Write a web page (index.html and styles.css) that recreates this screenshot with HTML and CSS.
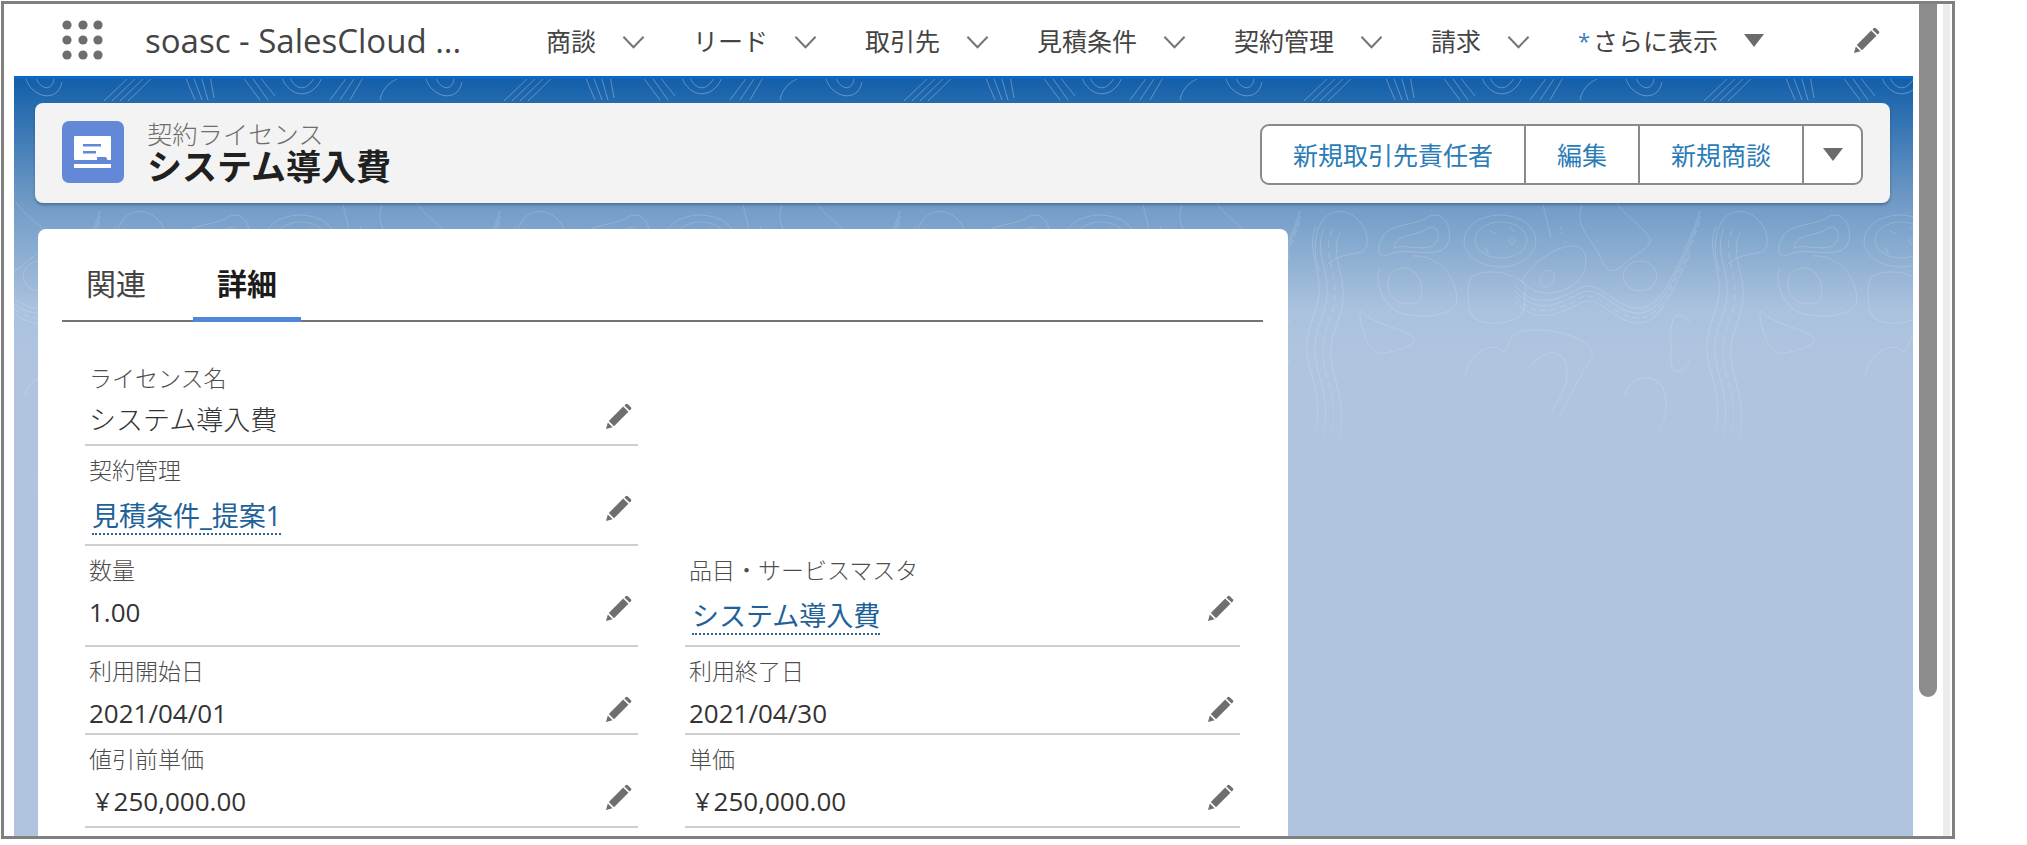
FILE: index.html
```html
<!DOCTYPE html>
<html lang="ja">
<head>
<meta charset="utf-8">
<title>システム導入費</title>
<link rel="stylesheet" href="styles.css">
</head>
<body>
<svg class="defs" width="0" height="0" aria-hidden="true">
  <defs>
    <symbol id="pencil" viewBox="0 0 26 26">
      <path d="M19.6 1.2a1.6 1.6 0 0 1 2.2 0l3 3a1.6 1.6 0 0 1 0 2.2l-1.2 1.2-5.2-5.2z"/>
      <path d="M17.2 3.6l5.2 5.2L8 23.2l-5.2-5.2z"/>
      <path d="M1.8 19.4l4.8 4.8L0 26z"/>
    </symbol>
    <symbol id="chev" viewBox="0 0 24 14">
      <path d="M1.5 1.5L12 12.5 22.5 1.5" fill="none" stroke="#737373" stroke-width="2"/>
    </symbol>
  </defs>
</svg>
<div class="frame">
  <div class="strip"></div>
  <div class="main">
    <header class="nav">
      <svg class="launcher" viewBox="0 0 42 41" width="42" height="41">
        <g fill="#6e6e6e">
          <circle cx="5" cy="5" r="4.6"/><circle cx="21" cy="5" r="4.6"/><circle cx="36" cy="5" r="4.6"/>
          <circle cx="5" cy="20" r="4.6"/><circle cx="21" cy="20" r="4.6"/><circle cx="36" cy="20" r="4.6"/>
          <circle cx="5" cy="35" r="4.6"/><circle cx="21" cy="35" r="4.6"/><circle cx="36" cy="35" r="4.6"/>
        </g>
      </svg>
      <span class="app-name">soasc - SalesCloud ...</span>
      <span class="nav-item">商談<svg class="chev"><use href="#chev"/></svg></span>
      <span class="nav-item">リード<svg class="chev"><use href="#chev"/></svg></span>
      <span class="nav-item">取引先<svg class="chev"><use href="#chev"/></svg></span>
      <span class="nav-item">見積条件<svg class="chev"><use href="#chev"/></svg></span>
      <span class="nav-item">契約管理<svg class="chev"><use href="#chev"/></svg></span>
      <span class="nav-item">請求<svg class="chev"><use href="#chev"/></svg></span>
      <span class="nav-more"><i class="star">*</i>さらに表示<b class="tri"></b></span>
      <svg class="pencil nav-pencil"><use href="#pencil"/></svg>
    </header>
    <main class="stage">
      <svg class="topo" width="100%" height="420" aria-hidden="true">
        <defs>
          <path id="wave" d="M225 210C245 232 265 226 290 212C310 203 320 228 345 232C365 234 375 215 385 195C392 180 400 165 410 135"/>
          <path id="wave0" d="M-175 210C-155 232 -135 226 -110 212C-90 203 -80 228 -55 232C-35 234 -25 215 -15 195C-8 180 0 165 10 135"/>
          <path id="vert" d="M26 150C15 175 34 195 28 225C22 250 10 262 22 300C28 320 30 340 24 360"/>
          <pattern id="tile" patternUnits="userSpaceOnUse" x="76" y="-3" width="400" height="400">
            <g fill="none" stroke="#fff" stroke-opacity=".17" stroke-width="1">
              <path d="M30 195C20 172 26 140 45 136C65 132 82 155 76 172C72 181 50 174 36 190"/>
              <path d="M92 162C100 146 125 151 140 140C158 134 165 160 155 172C140 183 115 170 98 179C88 183 86 173 92 162Z"/>
              <path d="M104 170C110 156 128 161 138 152C149 147 152 164 143 170C130 175 116 168 104 172Z"/>
              <ellipse cx="210" cy="165" rx="36" ry="26"/>
              <ellipse cx="211" cy="164" rx="26" ry="18"/>
              <path d="M200 155l6 3M220 152l5 4M196 172l2 6M222 162a3 3 0 1 0 .1 0"/>
              <path d="M253 129L261 162" />
              <path d="M270 150l2 8M276 165l-1 6" stroke-dasharray="3 3"/>
              <path d="M292 129C284 150 300 160 310 180C318 200 325 197 335 187C345 178 362 172 360 163C354 150 336 142 326 126"/>
              <ellipse cx="350" cy="200" rx="17" ry="15"/>
              <use href="#wave"/>
              <use href="#wave" transform="translate(0 5)"/>
              <use href="#wave" transform="translate(0 10)" stroke-dasharray="6 4"/>
              <use href="#wave" transform="translate(0 15)"/>
              <use href="#wave0"/>
              <use href="#wave0" transform="translate(0 5)"/>
              <use href="#wave0" transform="translate(0 10)" stroke-dasharray="6 4"/>
              <path d="M112 192C130 190 135 215 130 224C120 232 100 228 98 210C97 200 102 194 112 192Z"/>
              <path d="M122 180C150 178 170 205 166 228C160 240 130 244 108 236C92 228 84 205 90 192" />
              <path d="M182 200C200 192 225 196 236 210C232 225 240 240 222 244C205 250 185 248 180 236C178 222 176 208 182 200Z"/>
              <path d="M232 205C240 188 268 168 285 170C300 172 298 195 288 205C272 220 245 222 232 205Z"/>
              <path d="M250 203C255 190 268 192 263 206C258 214 250 212 250 203Z"/>
              <use href="#vert"/>
              <use href="#vert" transform="translate(8 2)"/>
              <use href="#vert" transform="translate(16 4)" stroke-dasharray="7 4"/>
              <use href="#vert" transform="translate(24 6)"/>
              <path d="M70 235C90 252 110 250 124 262C125 272 105 274 92 278C78 276 70 252 70 235Z"/>
              <path d="M175 300C178 280 196 268 208 272C222 285 212 260 232 255C260 250 305 262 302 280C290 300 280 320 270 340"/>
              <path d="M240 290C252 276 270 270 276 288C280 310 270 320 262 335"/>
              <path d="M335 320C340 300 360 296 372 310C380 325 376 345 366 360"/>
              <path d="M385 240C398 235 410 255 402 280C392 302 380 300 381 280C382 268 378 252 385 240Z"/>
            </g>
            <!-- stripes and arcs seen across the dark band just under the navigation -->
            <g fill="none" stroke="#fff" stroke-opacity=".3" stroke-width="1">
              <path d="M335 0C340 22 368 28 372 6M345 0C350 14 362 16 364 3"/>
              <path d="M14 25L40 0M22 25L48 0M30 25L56 0M38 25L64 0"/>
              <path d="M95 0L105 24M103 0L112 24M111 0L118 24M120 0L124 22"/>
              <path d="M152 0L170 24M161 0L178 24M169 0L185 20"/>
              <path d="M192 2C200 22 222 24 232 2M200 2C206 14 216 16 224 2"/>
              <path d="M240 24L258 0M250 24L266 0M260 24L274 0"/>
              <path d="M290 24C292 12 302 2 318 0"/>
              <path d="M2 70C22 45 24 105 4 112M-4 58C32 36 34 118 0 124"/>
            </g>
          </pattern>
        </defs>
        <rect width="100%" height="100%" fill="url(#tile)"/>
      </svg>

      <section class="panel">
        <span class="obj-icon">
          <svg viewBox="0 0 61 61" width="61" height="61">
            <path fill="#fff" d="M13 15h35a1 1 0 0 1 1 1v23H13a1 1 0 0 1-1-1V16a1 1 0 0 1 1-1z"/>
            <path fill="#6488d8" d="M21 23h18v2.500H21zM21 30h13v2.500H21zM35 36h9l1.500 3H35z"/>
            <path fill="#fff" d="M12 43h37v4H12z"/>
          </svg>
        </span>
        <div class="titles">
          <div class="obj-type">契約ライセンス</div>
          <h1 class="obj-name">システム導入費</h1>
        </div>
        <div class="actions">
          <button class="btn">新規取引先責任者</button>
          <button class="btn">編集</button>
          <button class="btn">新規商談</button>
          <button class="btn btn-menu"><b class="tri"></b></button>
        </div>
      </section>

      <section class="card">
        <nav class="tabs">
          <a class="tab">関連</a>
          <a class="tab tab-on">詳細</a>
        </nav>
        <div class="fields">
          <div class="field">
            <div class="label">ライセンス名</div>
            <div class="row"><span class="value">システム導入費</span><svg class="pencil"><use href="#pencil"/></svg></div>
          </div>
          <div class="field field-empty"></div>

          <div class="field">
            <div class="label">契約管理</div>
            <div class="row"><a class="value link">見積条件_提案1</a><svg class="pencil"><use href="#pencil"/></svg></div>
          </div>
          <div class="field field-empty"></div>

          <div class="field">
            <div class="label">数量</div>
            <div class="row"><span class="value num">1.00</span><svg class="pencil"><use href="#pencil"/></svg></div>
          </div>
          <div class="field">
            <div class="label">品目・サービスマスタ</div>
            <div class="row"><a class="value link">システム導入費</a><svg class="pencil"><use href="#pencil"/></svg></div>
          </div>

          <div class="field">
            <div class="label">利用開始日</div>
            <div class="row"><span class="value num">2021/04/01</span><svg class="pencil"><use href="#pencil"/></svg></div>
          </div>
          <div class="field">
            <div class="label">利用終了日</div>
            <div class="row"><span class="value num">2021/04/30</span><svg class="pencil"><use href="#pencil"/></svg></div>
          </div>

          <div class="field">
            <div class="label">値引前単価</div>
            <div class="row"><span class="value num money">¥ 250,000.00</span><svg class="pencil"><use href="#pencil"/></svg></div>
          </div>
          <div class="field">
            <div class="label">単価</div>
            <div class="row"><span class="value num money">¥ 250,000.00</span><svg class="pencil"><use href="#pencil"/></svg></div>
          </div>
        </div>
      </section>
    </main>
  </div>
  <div class="track"><div class="thumb"></div></div>
</div>
</body>
</html>
```

FILE: styles.css
```css
* { box-sizing: border-box; }

html, body {
  margin: 0;
  padding: 0;
  background: #fff;
}

body {
  font-family: "Open Sans", "Noto Sans CJK JP", sans-serif;
  color: #3e3e3c;
  overflow: hidden;
}

.defs { display: block; height: 0; }

.frame {
  display: flex;
  width: 1954px;
  height: 838px;
  margin: 1px 0 0 1px;
  border: 3px solid #808080;
  background: #fff;
  overflow: hidden;
}

.strip { flex: 0 0 10px; background: #fff; }

.main {
  flex: 0 0 1899px;
  display: flex;
  flex-direction: column;
}

/* navigation */
.nav {
  flex: 0 0 72px;
  display: flex;
  align-items: center;
  padding-left: 48px;
  font-size: 25px;
  color: #444;
}

.launcher { flex: none; margin-right: 41px; }

.app-name {
  flex: 0 0 401px;
  font-size: 33px;
  white-space: nowrap;
}

.nav-item {
  display: flex;
  align-items: center;
  gap: 26px;
  margin-right: 48px;
  white-space: nowrap;
}

.chev { width: 23px; height: 14px; flex: none; margin-top: 3px; }

.nav-more { display: flex; align-items: center; white-space: nowrap; }

.star {
  width: 15px;
  font-style: normal;
  color: #3a7fc0;
  font-size: 22px;
}

.tri {
  display: inline-block;
  width: 0;
  height: 0;
  border-left: 10px solid transparent;
  border-right: 10px solid transparent;
  border-top: 13px solid #6b6b6b;
}

.nav-more .tri { margin-left: 26px; }

.pencil { width: 26px; height: 26px; flex: none; fill: #6e6e6e; display: block; }

.nav-pencil { margin-left: 90px; }

/* stage */
.stage {
  position: relative;
  flex: 1;
  min-height: 0;
  display: flex;
  flex-direction: column;
  padding: 27px 23px 0 21px;
  border-top: 3px solid #0a6ac6;
  background: linear-gradient(#135fa9 0, #6f9ac6 122px, #aac2de 230px, #b0c4df 290px);
  overflow: hidden;
}

.topo {
  position: absolute;
  left: 0;
  top: 0;
  -webkit-mask-image: linear-gradient(#000 75%, transparent);
  mask-image: linear-gradient(#000 75%, transparent);
}

/* highlights panel */
.panel {
  position: relative;
  flex: 0 0 100px;
  margin-top: -3px;
  display: flex;
  align-items: center;
  padding: 0 27px;
  background: #f3f3f3;
  border-radius: 8px;
  box-shadow: 0 2px 3px rgba(40, 60, 90, .45);
}

.obj-icon {
  flex: none;
  width: 62px;
  height: 62px;
  margin: -2px 23px 0 0;
  border-radius: 7px;
  background: #6488d8;
}

.obj-icon svg { display: block; }

.obj-type {
  font-size: 25.300px;
  line-height: 28px;
  color: #706e6b;
  font-weight: 300;
}

.obj-name {
  margin: 0;
  font-size: 35px;
  line-height: 38px;
  font-weight: 700;
  color: #202020;
}

.actions {
  display: flex;
  height: 61px;
  margin: 2px 0 0 auto;
  border: 2px solid #8a8a8a;
  border-radius: 9px;
  background: #fff;
}

.btn {
  padding: 0 31px;
  margin: 0;
  border: 0;
  border-left: 2px solid #8a8a8a;
  background: transparent;
  font: inherit;
  font-size: 25px;
  color: #2b7cb6;
}

.btn:first-child { border-left: 0; }

.btn-menu {
  width: 59px;
  padding: 0;
  display: flex;
  align-items: center;
  justify-content: center;
}

/* record card */
.card {
  position: relative;
  flex: 1;
  min-height: 0;
  width: 1250px;
  margin: 26px 0 0 3px;
  padding: 0 25px 0 24px;
  background: #fff;
  border-radius: 8px 8px 0 0;
}

.tabs {
  display: flex;
  align-items: flex-end;
  gap: 23px;
  height: 93px;
  border-bottom: 2px solid #747474;
}

.tab {
  margin-bottom: -2px;
  padding: 0 24px 10px;
  border-bottom: 5px solid transparent;
  font-size: 30px;
  line-height: 46px;
  color: #444;
}

.tab-on {
  border-bottom-color: #4f87d9;
  font-weight: 700;
  color: #1c1c1c;
}

.fields {
  display: grid;
  grid-template-columns: 553px 555px;
  grid-template-rows: 92px 100px 101px 88px 93px;
  column-gap: 47px;
  margin-left: 23px;
  padding-top: 32px;
}

.field {
  display: flex;
  flex-direction: column;
  padding: 9px 0 0 4px;
  border-bottom: 2px solid #cfcfcf;
}

.field-empty { border-bottom-color: transparent; }

.label {
  font-size: 23px;
  line-height: 30px;
  color: #4d4d4d;
  font-weight: 300;
}

.row {
  flex: 1;
  display: flex;
  justify-content: space-between;
  align-items: flex-start;
  padding-right: 6px;
}

.value {
  margin-top: 10px;
  font-size: 27px;
  line-height: 34px;
  color: #333;
  font-weight: 300;
}

.num { font-size: 26px; font-weight: 400; }

.money { padding-left: 6px; word-spacing: -3px; }

.link {
  margin: 14px 0 0 3px;
  border-bottom: 2px dotted #33628f;
  color: #1f6299;
  font-weight: 400;
}

.row .pencil { margin-top: 10px; }

/* page scrollbar */
.track {
  flex: 1;
  padding: 0 2px 0 6px;
  background: linear-gradient(to left, #fff 2px, #ececec 2px, #ececec 9px, #fff 9px);
}

.thumb {
  width: 18px;
  height: 693px;
  background: #8c8c8c;
  border-radius: 0 0 9px 9px;
}
```
